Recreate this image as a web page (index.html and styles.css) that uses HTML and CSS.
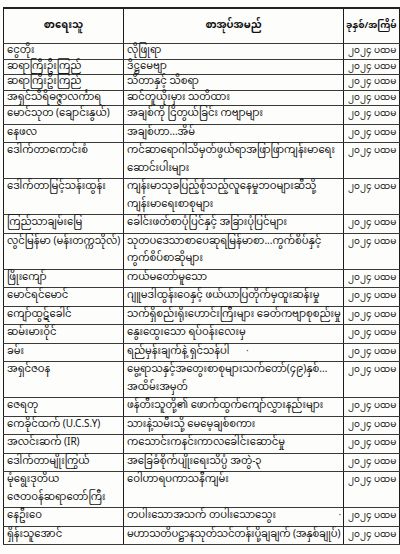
FILE: index.html
```html
<!DOCTYPE html>
<html lang="my">
<head>
<meta charset="utf-8">
<title>စာအုပ်စာရင်း</title>
<link rel="stylesheet" href="styles.css">
</head>
<body>
<table class="books">
  <colgroup>
    <col class="c-author">
    <col class="c-title">
    <col class="c-year">
  </colgroup>
  <thead>
    <tr>
      <th>စာရေးသူ</th>
      <th>စာအုပ်အမည်</th>
      <th class="yr">ခုနှစ်/အကြိမ်</th>
    </tr>
  </thead>
  <tbody>
    <tr class="tight"><td>ငွေတိုး</td><td>လိုဖြုရာ</td><td class="yr">၂၀၂၄ ပထမ</td></tr>
    <tr class="tight"><td>ဆရာကြီးဦးကြည်</td><td>ဒိဋ္ဌမေဗျာ</td><td class="yr">၂၀၂၄ ပထမ</td></tr>
    <tr class="tight"><td>ဆရာကြီးဦးကြည်</td><td>သိတာနှင့် သိစရာ</td><td class="yr">၂၀၂၄ ပထမ</td></tr>
    <tr class="tight"><td>အရှင်သီရိဓဇ္ဇာလင်္ကာရ</td><td>ဆင်တူယိုးမှား သတိထား</td><td class="yr">၂၀၂၄ ပထမ</td></tr>
    <tr><td>မောင်သုတ (ချောင်းနွယ်)</td><td>အချစ်ကို ငြိတွယ်ခြင်း ကဗျာများ</td><td class="yr">၂၀၂၄ ပထမ</td></tr>
    <tr><td>နေဖလ</td><td>အချစ်ဟာ...အိမ်</td><td class="yr">၂၀၂၄ ပထမ</td></tr>
    <tr><td>ဒေါက်တာကောင်းစံ</td><td>ကင်ဆာရောဂါသိမှတ်ဖွယ်ရာအဖြာဖြာကျန်းမာရေး<br>ဆောင်းပါးများ</td><td class="yr">၂၀၂၄ ပထမ</td></tr>
    <tr><td>ဒေါက်တာမြင့်သန်းထွန်း</td><td>ကျန်းမာသုခပြည့်စုံသည့်လူနေမှုဘဝများဆီသို့<br>ကျန်းမာရေးစာစုများ</td><td class="yr">၂၀၂၄ ပထမ</td></tr>
    <tr><td>ကြည်သာချမ်းမြေ</td><td>ခေါင်းဖတ်စာပုံပြင်နှင့် အခြားပုံပြင်များ</td><td class="yr">၂၀၂၄ ပထမ</td></tr>
    <tr><td>လွင်မြန်မာ (မန်းတက္ကသိုလ်)</td><td>သုတပဒေသာစာပေဆုရမြန်မာစာ...ကွက်စိပ်နှင့်<br>ကွက်စိပ်စာဆိုများ</td><td class="yr">၂၀၂၄ ပထမ</td></tr>
    <tr><td>ဖြိုးကျော်</td><td>ကယ်မတော်မူသော</td><td class="yr">၂၀၂၄ ပထမ</td></tr>
    <tr><td>မောင်ရင်မောင်</td><td>ဂျူမဒါထွန်းဝေနှင့် ဖယ်ယာပြတိုက်မှထူးဆန်းမှု</td><td class="yr">၂၀၂၄ ပထမ</td></tr>
    <tr><td>ကျော်ထွဋ်ခေါင်</td><td>သက်ရှိစည်းရိုးဟောင်းကြီးများ ခေတ်ကဗျာစုစည်းမှု</td><td class="yr">၂၀၂၄ ပထမ</td></tr>
    <tr><td>ဆမ်းမားဝိုင်</td><td>နွေးထွေးသော ရပ်ဝန်းလေးမှ</td><td class="yr">၂၀၂၄ ပထမ</td></tr>
    <tr><td>ခမ်း</td><td>ရည်မှန်းချက်နဲ့ ရှင်သန်ပါ <span class="speck">·</span></td><td class="yr">၂၀၂၄ ပထမ</td></tr>
    <tr><td>အရှင်ဇဝန</td><td>မွေ့ရာသနှင့်အတွေးစာစုများသက်တော်(၄၉)နှစ်...<br>အထိမ်းအမှတ်</td><td class="yr">၂၀၂၄ ပထမ</td></tr>
    <tr><td>ဇေရတု</td><td>ဖန်တီးသူတို့၏ ဖောက်ထွက်ကျော်လွှားနည်းများ</td><td class="yr">၂၀၂၄ ပထမ</td></tr>
    <tr><td>ကေခိုင်ထက် (U.C.S.Y)</td><td>သားနဲ့သမီးသို့ မေမေ့ချစ်စကား</td><td class="yr">၂၀၂၄ ပထမ</td></tr>
    <tr><td>အလင်းဆက် (IR)</td><td>ကသောင်းကနင်းကာလခေါင်းဆောင်မှု</td><td class="yr">၂၀၂၄ ပထမ</td></tr>
    <tr><td>ဒေါက်တာမျိုးကြွယ်</td><td>အခြေခံစိုက်ပျိုးရေးသိပ္ပံ အတွဲ-၃</td><td class="yr">၂၀၂၄ ပထမ</td></tr>
    <tr><td>မုံရွေးဒုတိယ<br>ဇေတဝန်ဆရာတော်ကြီး</td><td>ဝေါဟာရပကာသနီကျမ်း</td><td class="yr">၂၀၂၄ ပထမ</td></tr>
    <tr><td>နေဦးဝေ</td><td>တပါးသောအသက် တပါးသောသွေး <span class="speck right">·</span></td><td class="yr">၂၀၂၄ ပထမ</td></tr>
    <tr><td>ရှိန်းသူအောင်</td><td class="snug">မဟာသတိပဋ္ဌာနသုတ်သင်တန်းပို့ချချက် (အနှစ်ချုပ်)</td><td class="yr">၂၀၂၄ ပထမ</td></tr>
  </tbody>
</table>
</body>
</html>
```

FILE: styles.css
```css
html, body {
  margin: 0;
  padding: 0;
  background: #fdfdfb;
}

body {
  padding: 7px 0 0 3px;
  font-family: "Noto Sans Myanmar", "Noto Sans Myanmar UI", "Padauk", "Myanmar Text", "Noto Sans", "DejaVu Sans", sans-serif;
  font-size: 10px;
  color: #111;
}

.books {
  width: 396px;
  table-layout: fixed;
  border-collapse: collapse;
}

.c-author { width: 120px; }
.c-title { width: 220px; }
.c-year { width: 56px; }

.books th,
.books td {
  border-top: 1px solid #3a3a3a;
  border-bottom: 1px solid #3a3a3a;
  border-left: 1.5px solid #1c1c1c;
  border-right: 1.5px solid #1c1c1c;
  padding: 0 0 0 3px;
  white-space: nowrap;
  text-align: left;
  vertical-align: top;
}

.books thead th {
  height: 34px;
  border-top: 2px solid #222;
  font-weight: 700;
  text-align: center;
  vertical-align: middle;
  padding: 0;
}

.books thead th.yr {
  font-size: 9px;
  text-align: left;
  padding-left: 2px;
}

.books td {
  line-height: 17.5px;
}

.books td.yr {
  font-size: 9px;
  padding-left: 4px;
}

.books td.snug {
  letter-spacing: -0.15px;
}

.books tr.tight td {
  line-height: 14.5px;
}

.speck {
  color: #555;
  margin-left: 14px;
}

.speck.right {
  margin-left: 60px;
}
```
